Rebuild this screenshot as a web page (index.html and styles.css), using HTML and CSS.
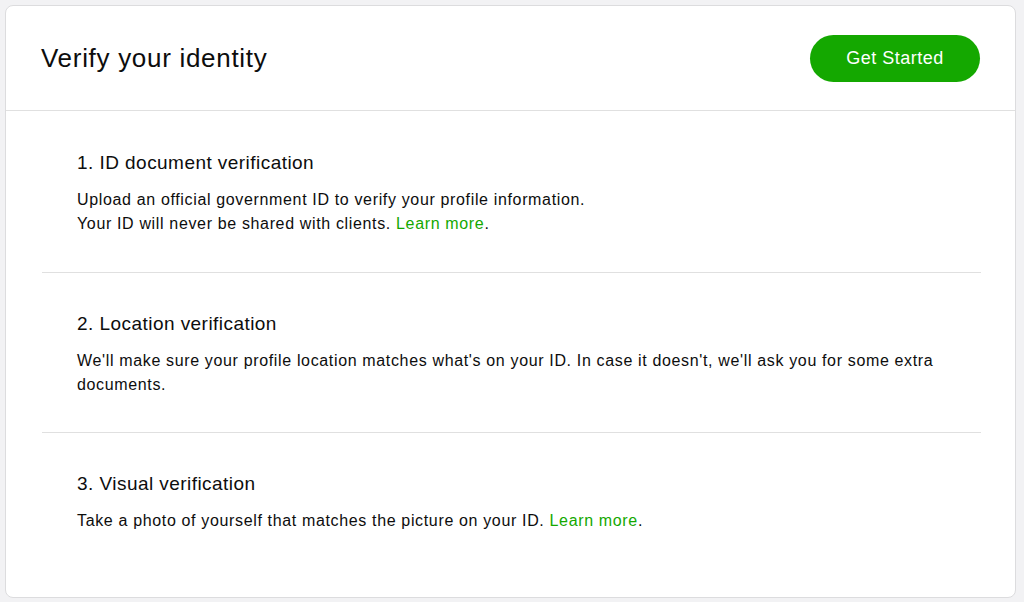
FILE: index.html
```html
<!DOCTYPE html>
<html lang="en">
<head>
<meta charset="utf-8">
<title>Verify your identity</title>
<link rel="stylesheet" href="styles.css">
</head>
<body>
<div class="card">
  <header class="card-header">
    <h1 class="title">Verify your identity</h1>
    <button class="btn-primary" type="button">Get Started</button>
  </header>
  <div class="card-body">
    <section class="step">
      <h2 class="step-title">1. ID document verification</h2>
      <p class="step-text">Upload an official government ID to verify your profile information.<br>Your ID will never be shared with clients. <a class="link" href="#">Learn more</a>.</p>
    </section>
    <section class="step">
      <h2 class="step-title">2. Location verification</h2>
      <p class="step-text">We'll make sure your profile location matches what's on your ID. In case it doesn't, we'll ask you for some extra documents.</p>
    </section>
    <section class="step">
      <h2 class="step-title">3. Visual verification</h2>
      <p class="step-text">Take a photo of yourself that matches the picture on your ID. <a class="link" href="#">Learn more</a>.</p>
    </section>
  </div>
</div>
</body>
</html>
```
FILE: styles.css
```css
* { box-sizing: border-box; }
html, body { margin: 0; }
body {
  background: #f2f2f4;
  font-family: "Liberation Sans", Arial, sans-serif;
  color: #0d0d0d;
  padding: 5px 8px 4px 5px;
}
.card {
  background: #fff;
  border: 1px solid #dcdcde;
  border-radius: 8px;
  height: 593px;
  display: flex;
  flex-direction: column;
}
.card-header {
  display: flex;
  align-items: center;
  justify-content: space-between;
  padding: 0 35px 0 35px;
  height: 105px;
  border-bottom: 1px solid #e0e0e0;
}
.title {
  margin: 0;
  font-size: 26px;
  font-weight: 400;
  letter-spacing: 0.7px;
}
.btn-primary {
  background: #14a800;
  color: #fff;
  border: none;
  border-radius: 24px;
  width: 170px;
  height: 47px;
  font-family: inherit;
  font-size: 18px;
  font-weight: 400;
  letter-spacing: 0.5px;
  padding: 0;
}
.card-body {
  padding: 0 34px 0 36px;
}
.step {
  padding: 39px 35px 35px;
  border-bottom: 1px solid #e0e0e0;
}
.step:first-child { padding-top: 40px; padding-bottom: 36px; }
.step:last-child { border-bottom: none; }
.step-title {
  margin: 0 0 13px;
  font-size: 19px;
  line-height: 24px;
  font-weight: 400;
  letter-spacing: 0.45px;
}
.step-text {
  margin: 0;
  font-size: 16px;
  line-height: 24px;
  letter-spacing: 0.65px;
}
.link {
  color: #14a800;
  text-decoration: none;
}
```
